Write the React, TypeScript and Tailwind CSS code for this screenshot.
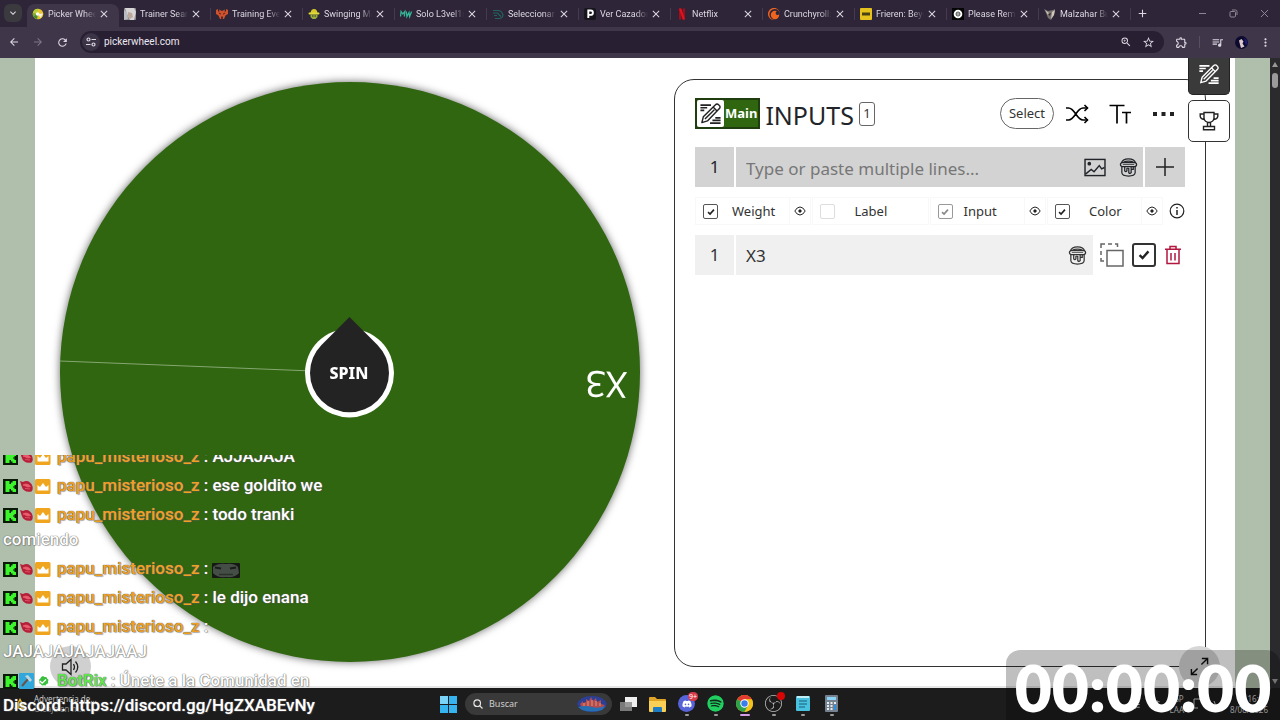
import type { ReactNode } from "react";
import {
  MdAdd, MdArrowBack, MdArrowForward, MdClose, MdKeyboardArrowDown, MdMoreVert, MdOutlineExtension,
  MdQueueMusic, MdRefresh, MdStarBorder, MdTune, MdZoomIn,
} from "react-icons/md";
import { FaDiscord, FaSpotify } from "react-icons/fa";
import { SiCrunchyroll, SiObsstudio } from "react-icons/si";

type IconProps = { className?: string };

/* ---------- favicons ---------- */

const Fav = ({ children }: { children: ReactNode }) => (
  <svg viewBox="0 0 12 12" className="h-3 w-3 shrink-0" aria-hidden="true">{children}</svg>
);

const favicons: Record<string, ReactNode> = {
  wheel: (
    <Fav>
      <circle cx="6" cy="6" r="5.3" fill="#e8c52c" />
      <path d="M6 6V.7A5.3 5.3 0 0 0 .9 5z" fill="#b9cf3a" />
      <path d="M6 6L1 8A5.3 5.3 0 0 0 5 11.2z" fill="#4c8a36" />
      <path d="M6 6L.8 5A5 5 0 0 0 1.2 8.2z" fill="#79ab35" />
      <circle cx="5.6" cy="6" r="1.8" fill="#fff" />
      <path d="M6 6l5-.5-2.500 4.500z" fill="#f6f2dd" />
    </Fav>
  ),
  trainer: (
    <Fav>
      <rect width="12" height="12" rx="1" fill="#8d8b90" />
      <path d="M1 0h9l2 4-2 8H6L3 6z" fill="#d8d5d6" />
      <path d="M4 4l4 1 1 4-3 2-2-3z" fill="#bda79a" />
      <path d="M0 2l3 2 1 7-4 1z" fill="#b9bcc0" />
    </Fav>
  ),
  events: (
    <Fav>
      <path d="M0 2l2-1v2.500h1.500L3 1.500 6 3l3-1.500-.5 2H10V1l2 1v4L9.500 7.500 8 11H6.800V8.500H5.200V11H4L2.500 7.500 0 6z" fill="#d1512b" />
      <path d="M3 5l2 1.200M9 5L7 6.200" stroke="#3f2430" strokeWidth="1" />
    </Fav>
  ),
  swing: (
    <Fav>
      <path d="M2.500 5Q3 1 6 1t3.500 4z" fill="#d6c926" />
      <rect x=".5" y="4.500" width="11" height="2" rx="1" fill="#e4da3a" />
      <path d="M2.500 6.500h7V9L7.500 11h-3L2.500 9z" fill="#9cae3d" />
      <path d="M4 7.500h1.500v1H4zM6.500 7.500H8v1H6.500z" fill="#2b2b20" />
    </Fav>
  ),
  mw: (
    <Fav>
      <path d="M.5 8.500l.6-5L2.800 6l2-2.500-.4 5M6.300 3.500l.6 5L9 4.500l.6 4 2-5" fill="none" stroke="#35b597" strokeWidth="1.300" />
    </Fav>
  ),
  select: (
    <Fav>
      <path d="M1 2.500h5.500Q10 3 11 7q-.5 3.500-4 3.500H3M1 5h4.500L9 8.500M2 7.500h3" fill="none" stroke="#23625f" strokeWidth="1.200" />
    </Fav>
  ),
  ver: (
    <Fav>
      <rect width="12" height="12" rx="2" fill="#17151b" />
      <path d="M4.300 10V2.500h2.400a2.200 2.200 0 0 1 0 4.400H4.500" fill="none" stroke="#fff" strokeWidth="1.900" />
    </Fav>
  ),
  netflix: (
    <Fav>
      <path d="M3 .5h2.300v11H3zM6.700.5H9v11H6.700z" fill="#a30d17" />
      <path d="M3 .5h2.300L9 11.500H6.700z" fill="#df1420" />
    </Fav>
  ),
  crunchy: <SiCrunchyroll className="h-3 w-3 shrink-0 text-[#f0641e]" />,
  imdb: (
    <Fav>
      <rect width="12" height="12" rx="1" fill="#e6c31c" />
      <path d="M2 4.500h8v3H2z" fill="#4c4113" />
    </Fav>
  ),
  remain: (
    <Fav>
      <rect width="12" height="12" fill="#050505" />
      <circle cx="6" cy="6" r="4.300" fill="#fff" />
      <circle cx="6" cy="6" r="2" fill="none" stroke="#222" strokeWidth=".8" />
      <path d="M4.500 6h3" stroke="#222" strokeWidth=".8" />
    </Fav>
  ),
  malzahar: (
    <Fav>
      <path d="M0 1l4 2 5-1 2-1-1 6-3 5-3-2-2-5z" fill="#77716f" />
      <path d="M1 2l4 3-1 2zM8 4l3-2-1 5-3 4z" fill="#cfc6ba" />
      <path d="M4 6l3-1-1 3z" fill="#322c30" />
    </Fav>
  ),
};

const tabs = [
  ["wheel", "Picker Whee"],
  ["trainer", "Trainer Sear"],
  ["events", "Training Ever"],
  ["swing", "Swinging Ma"],
  ["mw", "Solo L3vel1n"],
  ["select", "Seleccionar p"],
  ["ver", "Ver Cazador"],
  ["netflix", "Netflix"],
  ["crunchy", "Crunchyroll:"],
  ["imdb", "Frieren: Beyo"],
  ["remain", "Please Rema"],
  ["malzahar", "Malzahar Bu"],
];

/* ---------- page icons ---------- */

const PencilLines = ({ className }: IconProps) => (
  <svg viewBox="0 0 24 24" className={className} fill="none" stroke="currentColor" strokeWidth="1.500" aria-hidden="true">
    <path d="M1.500 3.200h11M1.500 6h7M1.500 8.800h4" strokeWidth="1.800" />
    <path d="M17 16.500h5.500M14 19.200h8.500M11.500 22h11" strokeWidth="1.800" />
    <path d="M3 21.500l1.500-6L17.200 2.800a2.200 2.200 0 0 1 3.200 0l.9.900a2.200 2.200 0 0 1 0 3.200L8.800 19.700z" strokeLinejoin="round" />
    <path d="M14.700 5.300l4.100 4.100M6.200 17.800L16 8" />
  </svg>
);

const Trophy = ({ className }: IconProps) => (
  <svg viewBox="0 0 20 20" className={className} fill="none" stroke="currentColor" strokeWidth="1.400" aria-hidden="true">
    <path d="M5 1.500h10v5.500q-.3 4-5 4.500-4.700-.5-5-4.500zM5 3H1.200v2.500Q1.500 8 5.200 8.500M15 3h3.800v2.500q-.3 2.500-4 3M8.500 11.500V15M11.500 11.500V15M4.500 15.500h11v3.300h-11z" />
  </svg>
);

const Bucket = ({ className }: IconProps) => (
  <svg viewBox="0 0 20 20" className={className} fill="none" stroke="currentColor" strokeWidth="1.300" aria-hidden="true">
    <path d="M2.500 5.500Q3.500 1 10 1t7.500 4.500" />
    <path d="M4 4.800Q10 1.800 16 4.800" />
    <rect x="1.500" y="4.800" width="17" height="4.200" rx="2.100" />
    <path d="M3 9v6.500q.5 3.500 7 3.500t7-3.500V9" />
    <path d="M6 9v4.500q1.200 1.500 2.300 0V11q1-.8 2 0v4.500q1.300 1.500 2.500 0V9.500M15 9v3h-2" />
    <path d="M4 6.900h12" strokeWidth=".8" />
  </svg>
);

const Shuffle = ({ className }: IconProps) => (
  <svg viewBox="0 0 24 20" className={className} fill="none" stroke="currentColor" strokeWidth="1.600" aria-hidden="true">
    <path d="M1 4h2.500C10 4 11.500 16 18 16h4.500M1 16h2.500C10 16 11.500 4 18 4h4.500" />
    <path d="M19.500 1l3 3-3 3M19.500 13l3 3-3 3" />
  </svg>
);

const TextSize = ({ className }: IconProps) => (
  <svg viewBox="0 0 24 24" className={className} fill="none" stroke="currentColor" strokeWidth="1.700" aria-hidden="true">
    <path d="M1.500 3.500h15M9 3.500V21.500M14 10.500h9M18.500 10.500V21.500" />
  </svg>
);

const Picture = ({ className }: IconProps) => (
  <svg viewBox="0 0 24 20" className={className} fill="none" stroke="currentColor" strokeWidth="1.500" aria-hidden="true">
    <rect x="1.500" y="1.500" width="21" height="17" />
    <path d="M2 17l6-5 3 2.500L16.500 8l2.500 3.500 3-1.500" />
    <circle cx="6" cy="6" r="1.200" fill="currentColor" />
  </svg>
);

const Eye = () => (
  <svg viewBox="0 0 12 10" className="h-[10px] w-3" fill="none" stroke="#222" strokeWidth="1" aria-hidden="true">
    <path d="M.8 5Q3 1 6 1t5.200 4Q9 9 6 9T.8 5z" />
    <circle cx="6" cy="5" r="1.200" fill="#222" />
  </svg>
);

const Trash = ({ className }: IconProps) => (
  <svg viewBox="0 0 18 20" className={className} fill="none" stroke="currentColor" strokeWidth="1.500" aria-hidden="true">
    <path d="M1 4.300h16M6 4V1.500h6V4M3 4.500v14h12v-14M7 8v7.500M11 8v7.500" />
  </svg>
);

const Duplicate = ({ className }: IconProps) => (
  <svg viewBox="0 0 24 24" className={className} fill="none" stroke="#666" strokeWidth="1.500" aria-hidden="true">
    <rect x="7" y="7.500" width="16" height="15.500" />
    <path d="M1 5V1h4M8 1h4M15 1h2.500v3M1 8v4M1 15v3h3" />
  </svg>
);

const Tick = ({ className }: IconProps) => (
  <svg viewBox="0 0 10 10" className={className} fill="none" stroke="currentColor" strokeWidth="2" aria-hidden="true">
    <path d="M1.300 5.200l2.500 2.400L8.700 2" />
  </svg>
);

const Speaker = ({ className }: IconProps) => (
  <svg viewBox="0 0 20 20" className={className} fill="none" stroke="currentColor" strokeWidth="1.300" aria-hidden="true">
    <path d="M1.500 7v6h3.500l5 4.500v-15L5 7zM12.500 7q2 3 0 6M14.500 4.500q4.500 5.500 0 11" />
  </svg>
);

const Expand = ({ className }: IconProps) => (
  <svg viewBox="0 0 20 20" className={className} fill="none" stroke="currentColor" strokeWidth="1.500" aria-hidden="true">
    <path d="M12 8l6.500-6.500M12.500 1.500h6v6M8 12l-6.500 6.500M1.500 12.500v6h6" />
  </svg>
);

/* ---------- browser chrome ---------- */

function Browser() {
  return (
    <header className="shrink-0 text-[#ddd8e4]">
      <div className="flex h-[27px] items-end bg-[#2e2638]">
        <button aria-label="Search tabs" className="mb-[5px] ml-1 mr-[5px] flex h-[18px] w-[18px] items-center justify-center rounded-md bg-[#3b3a3e]">
          <MdKeyboardArrowDown className="h-3 w-3" />
        </button>
        <nav className="flex min-w-0" aria-label="Tabs">
          {tabs.map(([icon, title], i) => (
            <div
              key={title}
              className={`flex h-[23px] w-[92px] min-w-0 items-center pb-1 pl-[5px] ${i === 0 ? "rounded-t-lg bg-[#3f3749]" : ""}`}
            >
              {favicons[icon]}
              <a
                href="#tab"
                className="ml-1 w-12 overflow-hidden whitespace-nowrap font-['Roboto',sans-serif] text-[9px] leading-4 [mask-image:linear-gradient(to_right,black_75%,transparent)]"
              >
                {title}
              </a>
              <button aria-label={`Close ${title}`} className="ml-[2px]">
                <MdClose className="h-3 w-3" />
              </button>
              <span className={`ml-auto h-3 w-px ${i === 0 ? "" : "bg-[#443c4e]"}`} />
            </div>
          ))}
        </nav>
        <button aria-label="New tab" className="mb-[7px] ml-[5px]"><MdAdd className="h-[13px] w-[13px]" /></button>
        <div className="mb-[9px] ml-auto mr-[11px] flex items-center gap-[22px] text-[#8d8795]">
          <button aria-label="Minimize"><svg viewBox="0 0 9 9" className="h-[9px] w-[9px]" stroke="currentColor"><path d="M1 4.500h7" /></svg></button>
          <button aria-label="Restore">
            <svg viewBox="0 0 9 9" className="h-[9px] w-[9px]" fill="none" stroke="currentColor"><rect x="1" y="2.500" width="5.500" height="5.500" rx="1" /><path d="M3 1h3.500Q8 1 8 2.500V6" /></svg>
          </button>
          <button aria-label="Close"><svg viewBox="0 0 9 9" className="h-[9px] w-[9px]" stroke="currentColor"><path d="M1 1l7 7M8 1L1 8" /></svg></button>
        </div>
      </div>
      <div className="flex h-[31px] items-center bg-[#3f3749] pb-px pl-[2px] pr-2">
        <button aria-label="Back" className="flex w-6 justify-center"><MdArrowBack className="h-3 w-3" /></button>
        <button aria-label="Forward" className="flex w-6 justify-center text-[#7e7688]"><MdArrowForward className="h-3 w-3" /></button>
        <button aria-label="Reload" className="flex w-6 justify-center"><MdRefresh className="h-[13px] w-[13px]" /></button>
        <div className="ml-[6px] flex h-[22px] flex-1 items-center rounded-full bg-[#281f32] pl-[2px] pr-[9px]">
          <button aria-label="Site information" className="flex h-[18px] w-[18px] items-center justify-center rounded-full bg-[#3b3346]">
            <svg viewBox="0 0 10 10" className="h-[10px] w-[10px]" fill="none" stroke="currentColor" strokeWidth="1.200" aria-hidden="true">
              <path d="M5.500 2.500H10M0 7.500h4.500" /><circle cx="2.500" cy="2.500" r="1.500" /><circle cx="7.500" cy="7.500" r="1.500" />
            </svg>
          </button>
          <input aria-label="Address" defaultValue="pickerwheel.com" className="ml-1 min-w-0 flex-1 bg-transparent font-['Roboto',sans-serif] text-[10px] leading-4 text-[#ece8f0] outline-none" />
          <button aria-label="Zoom"><MdZoomIn className="h-3 w-3" /></button>
          <button aria-label="Bookmark" className="ml-[10px]"><MdStarBorder className="h-[13px] w-[13px]" /></button>
        </div>
        <button aria-label="Extensions" className="ml-[11px]"><MdOutlineExtension className="h-[13px] w-[13px]" /></button>
        <span className="ml-[11px] h-3 w-px bg-[#574f62]" />
        <button aria-label="Media controls" className="ml-[11px]"><MdQueueMusic className="h-[13px] w-[13px]" /></button>
        <button aria-label="Profile" className="ml-[11px]">
          <svg viewBox="0 0 13 13" className="h-[13px] w-[13px]" aria-hidden="true">
            <circle cx="6.500" cy="6.500" r="6.500" fill="#0c0b2e" />
            <path d="M4 4.500l2.500-1.500 2 2.500-1 2 2 3L6 12 5 8.500z" fill="#ddc9cd" />
            <path d="M9 1.500l3 3 .5 3.500-2 1z" fill="#1d1a70" />
          </svg>
        </button>
        <button aria-label="Menu" className="ml-[11px]"><MdMoreVert className="h-[13px] w-[13px]" /></button>
      </div>
    </header>
  );
}

/* ---------- wheel ---------- */

function Wheel() {
  return (
    <section className="flex min-w-0 flex-1 items-center justify-center pr-[10px]">
      <svg viewBox="0 0 580 580" className="w-[580px] max-w-full overflow-visible drop-shadow-[0_0_4px_rgba(0,0,0,0.6)]" role="img" aria-label="Wheel">
        <circle cx="290" cy="290" r="290" fill="#2f660f" />
        <path d="M0 279L290 290.500" stroke="#86a672" strokeWidth="1" />
        <text
          transform="translate(546 303) rotate(182)"
          textAnchor="middle"
          dominantBaseline="central"
          fill="#fff"
          className="font-['Noto_Sans',sans-serif] text-[36px]"
        >
          X3
        </text>
        <circle cx="289.500" cy="291" r="44.500" fill="#fff" />
        <path d="M289.500 235L317.500 263A39.500 39.500 0 1 1 261.500 263z" fill="#242323" />
        <text x="289" y="297" textAnchor="middle" fill="#fff" className="font-['Noto_Sans',sans-serif] text-[16px] font-extrabold">SPIN</text>
      </svg>
    </section>
  );
}

/* ---------- inputs panel ---------- */

type ColumnProps = { name: string; box: string; pad?: string; tick?: string; eye?: boolean };

const columns: ColumnProps[] = [
  { name: "Weight", box: "border-[#555]", tick: "text-[#222]", eye: true },
  { name: "Label", box: "border-[#ddd]" },
  { name: "Input", box: "border-[#999]", pad: "pr-4", tick: "text-[#888]", eye: true },
  { name: "Color", box: "border-[#555]", tick: "text-[#222]", eye: true },
];

function ColumnToggle({ name, box, pad = "", tick, eye }: ColumnProps) {
  return (
    <div className="flex h-7 min-w-0 flex-1 basis-0 items-center border border-[#f8f8f8] pl-[7px]">
      <label className={`flex flex-1 items-center pt-px text-[13px] text-[#333] ${pad}`}>
        <span className="grid place-items-center">
          <input type="checkbox" defaultChecked={!!tick} className={`col-start-1 row-start-1 h-[15px] w-[15px] appearance-none rounded-[2px] border ${box}`} />
          {tick && <Tick className={`col-start-1 row-start-1 h-2 w-2 ${tick}`} />}
        </span>
        <span className="flex-1 text-center">{name}</span>
      </label>
      {eye ? (
        <button aria-label={`Show ${name}`} className="flex h-full w-[21px] items-center justify-center border-l border-[#f8f8f8]"><Eye /></button>
      ) : (
        <span className="w-[21px]" />
      )}
    </div>
  );
}

function InputsPanel() {
  return (
    <section className="mb-[19px] mr-[29px] mt-[21px] w-[532px] shrink-0 rounded-[20px] border border-[#333] px-5 pt-[18px]">
      <div className="flex h-[31px] items-center">
        <button className="flex h-[31px] items-center gap-px border-2 border-[#1f3d0e] bg-[#2f660f] pr-px text-[13px] font-bold text-white">
          <span className="flex h-[27px] w-[27px] items-center justify-center rounded-[2px] bg-white text-[#222]"><PencilLines className="h-[23px] w-[23px]" /></span>
          Main
        </button>
        <h1 className="ml-[5px] pt-[2px] text-[25px] leading-8 text-[#212529]">INPUTS</h1>
        <span className="ml-[5px] flex h-6 w-4 items-center justify-center rounded-[3px] border border-[#666] text-[13px] text-[#333]">1</span>
        <button className="ml-auto h-[31px] w-[54px] rounded-full border border-[#666] pt-px text-[13px] text-[#333]">Select</button>
        <button aria-label="Shuffle" className="ml-[11px]"><Shuffle className="h-5 w-6" /></button>
        <button aria-label="Text size" className="ml-[19px]"><TextSize className="h-6 w-6" /></button>
        <button aria-label="More" className="ml-[21px] mr-[11px]">
          <svg viewBox="0 0 21 4" className="h-1 w-[21px]" fill="#222"><path d="M0 0h4v4H0zM8.500 0h4v4h-4zM17 0h4v4h-4z" /></svg>
        </button>
      </div>

      <form className="mt-[18px] flex h-10 gap-[2px] text-[17px] text-[#212529]">
        <span className="flex w-[39px] items-center justify-center bg-[#d3d3d3]">1</span>
        <div className="flex flex-1 items-center bg-[#d3d3d3] pr-[5px]">
          <input aria-label="New input" placeholder="Type or paste multiple lines..." className="min-w-0 flex-1 bg-transparent pl-[10px] pt-[3px] outline-none placeholder:text-[#777]" />
          <button type="button" aria-label="Add image"><Picture className="h-[19px] w-6" /></button>
          <button type="button" aria-label="Pick color" className="ml-[12px]"><Bucket className="h-[19px] w-[19px]" /></button>
        </div>
        <button type="button" aria-label="Add" className="flex w-10 items-center justify-center bg-[#d3d3d3]">
          <svg viewBox="0 0 18 18" className="h-[18px] w-[18px]" stroke="#222" strokeWidth="1.500"><path d="M9 0v18M0 9h18" /></svg>
        </button>
      </form>

      <div className="mt-[10px] flex items-center gap-px">
        {columns.map((c) => <ColumnToggle key={c.name} {...c} />)}
        <button aria-label="Information" className="ml-[5px]">
          <svg viewBox="0 0 16 16" className="h-4 w-4" fill="none" stroke="#222" strokeWidth="1.200"><circle cx="8" cy="8" r="6.800" /><path d="M8 7v5M8 4v1.500" strokeWidth="1.500" /></svg>
        </button>
      </div>

      <div className="mt-[10px] flex h-10 items-center text-[17px] text-[#333]">
        <span className="flex h-full w-[39px] items-center justify-center bg-[#f0f0f0]">1</span>
        <div className="ml-[2px] flex h-full flex-1 items-center bg-[#f0f0f0] pr-[6px]">
          <input aria-label="Input 1" defaultValue="X3" className="min-w-0 flex-1 bg-transparent pl-[10px] pt-px outline-none" />
          <button aria-label="Color of input 1"><Bucket className="h-[19px] w-[19px]" /></button>
        </div>
        <button aria-label="Duplicate" className="ml-[7px]"><Duplicate className="h-6 w-6" /></button>
        <label className="ml-2 grid place-items-center">
          <input type="checkbox" defaultChecked aria-label="Enable input 1" className="col-start-1 row-start-1 h-6 w-6 appearance-none rounded-[3px] border-2 border-[#333]" />
          <Tick className="col-start-1 row-start-1 h-3 w-3 text-[#222]" />
        </label>
        <button aria-label="Delete" className="ml-2 mr-[3px] text-[#b3173f]"><Trash className="h-5 w-[18px]" /></button>
      </div>
    </section>
  );
}

function Page() {
  return (
    <div className="relative flex min-h-0 flex-1">
      <div className="w-[35px] shrink-0 bg-[#b0bfab]" />
      <main className="flex min-w-0 flex-1 border-b-2 border-[#e6e6e6] bg-white">
        <Wheel />
        <InputsPanel />
      </main>
      <div className="w-[35px] shrink-0 bg-[#b0bfab]" />
      <div className="flex w-[10px] shrink-0 flex-col items-center bg-[#2b2a2c] py-1">
        <svg viewBox="0 0 6 5" className="h-[5px] w-[6px]" fill="#999"><path d="M3 0l3 5H0z" /></svg>
        <span className="mt-[6px] h-[15px] w-[6px] rounded-full bg-[#9b9b9b]" />
        <svg viewBox="0 0 6 5" className="mt-auto h-[5px] w-[6px]" fill="#999"><path d="M0 0h6L3 5z" /></svg>
      </div>
      <div className="absolute right-[50px] top-0 flex flex-col gap-[5px]">
        <button aria-label="Inputs view" className="flex h-[37px] w-[42px] items-center justify-center rounded-b-[5px] border border-t-0 border-[#222] bg-[#3a3a3a] pb-1 text-white"><PencilLines className="h-[22px] w-[22px]" /></button>
        <button aria-label="Results view" className="flex h-[42px] w-[42px] items-center justify-center rounded-[5px] border border-[#333] bg-white text-[#222]"><Trophy className="h-5 w-5" /></button>
      </div>
      <button aria-label="Sound" className="absolute bottom-px left-[50px] flex h-[41px] w-[41px] items-center justify-center rounded-full bg-[#d0d0d0] text-[#222]"><Speaker className="h-5 w-5" /></button>
      <button aria-label="Full screen" className="absolute bottom-px right-[60px] flex h-[41px] w-[41px] items-center justify-center rounded-full bg-[#d6d6d6] text-[#111]"><Expand className="h-[19px] w-[19px]" /></button>
    </div>
  );
}

/* ---------- taskbar ---------- */

function AppButton({ label, children, mark = "bg-[#9a9a9a] w-1" }: { label: string; children: ReactNode; mark?: string }) {
  return (
    <button aria-label={label} className="flex w-[17px] flex-col items-center gap-[2px] pt-[3px]">
      {children}
      <span className={`h-[2px] rounded-full ${mark}`} />
    </button>
  );
}

function Taskbar() {
  return (
    <footer className="grid h-8 shrink-0 grid-cols-[1fr_auto_1fr] items-center bg-[#1c1c1c] text-[#c8c8c8]">
      <div className="flex items-center gap-[7px] pl-[13px]">
        <svg viewBox="0 0 14 14" className="h-[14px] w-[14px]" aria-hidden="true"><path d="M7 1l6 11H1z" fill="#e9bb28" /><path d="M7 4.500v4M7 9.500v1.300" stroke="#222" strokeWidth="1.200" /></svg>
        <div className="text-[8px] leading-[10px]">
          <div>Advertencia de...</div>
          <div className="text-[#8d8d8d]">Oleaje en m...</div>
        </div>
      </div>
      <div className="flex items-center gap-3">
        <button aria-label="Start" className="-mr-1">
          <svg viewBox="0 0 17 17" className="h-[17px] w-[17px]" fill="#35b4f0"><path d="M0 0h8v8H0zM9 0h8v8H9zM0 9h8v8H0zM9 9h8v8H9z" /><path d="M0 0h8v8H0z" fill="#7ad4fa" /></svg>
        </button>
        <label className="-mr-1 flex h-[22px] w-[147px] items-center overflow-hidden rounded-full bg-[#393939] pl-2 pr-1">
          <svg viewBox="0 0 10 10" className="h-[10px] w-[10px] shrink-0" fill="none" stroke="#e5e5e5" strokeWidth="1.200"><circle cx="4.200" cy="4.200" r="3.300" /><path d="M6.600 6.600L9.500 9.500" /></svg>
          <input aria-label="Buscar" placeholder="Buscar" className="ml-[6px] min-w-0 flex-1 bg-transparent text-[9px] leading-4 outline-none placeholder:text-[#cfcfcf]" />
          <svg viewBox="0 0 32 18" className="h-[18px] w-8 shrink-0" aria-hidden="true">
            <path d="M1 9Q4 1 16 1t15 8q-3 8-15 8T1 9z" fill="#2b3f96" />
            <path d="M4 9l3-3v2l3-1V4l3 2 2-4 2 4 3-3 1 4 4-2v4l4 1-3 3H6z" fill="#b04c52" />
            <path d="M8 8v3M12 6v5M16 5v6M20 6v5M24 8v3" stroke="#e8946a" />
            <path d="M2 12q8-2 14 0t14-1l-4 4q-10 3-20 0z" fill="#256fb2" />
          </svg>
        </label>
        <button aria-label="Task view"><svg viewBox="0 0 17 15" className="h-[15px] w-[17px]"><path d="M5 0h12v10H5z" fill="#efefef" /><path d="M0 5h12v9H0z" fill="#8b8b8b" fillOpacity=".85" /></svg></button>
        <button aria-label="File explorer">
          <svg viewBox="0 0 17 15" className="h-[15px] w-[17px]"><path d="M0 1q0-1 1-1h5l2 2h8q1 0 1 1v11H0z" fill="#e0a526" /><path d="M0 4h17v10q0 1-1 1H1q-1 0-1-1z" fill="#f9cf55" /><path d="M4 15v-4q0-1 1-1h7q1 0 1 1v4z" fill="#1d7cc4" /></svg>
        </button>
        <AppButton label="Discord">
          <span className="relative flex h-[17px] w-[17px] items-center justify-center rounded-full bg-[#5763d8] text-white">
            <FaDiscord className="h-[10px] w-[10px]" />
            <span className="absolute -right-[3px] -top-[3px] rounded-full bg-[#d63b49] px-px text-[7px] leading-[9px]">9+</span>
          </span>
        </AppButton>
        <AppButton label="Spotify"><FaSpotify className="h-[17px] w-[17px] rounded-full bg-[#14271b] text-[#20cf60]" /></AppButton>
        <AppButton label="Chrome" mark="bg-[#d69ce6] w-[10px]">
          <svg viewBox="0 0 17 17" className="h-[17px] w-[17px]">
            <circle cx="8.500" cy="8.500" r="8.500" fill="#f4c21b" />
            <path d="M8.500 8.500L1.140 4.250A8.500 8.500 0 0 1 15.860 4.250H8.500z" fill="#e23a2e" />
            <path d="M8.500 8.500L1.140 4.250A8.500 8.500 0 0 0 8.500 17l3.500-6.500z" fill="#2ba24c" />
            <path d="M8.500 4.500h7.500l-.140-.250A8.500 8.500 0 0 1 8.500 17l3.500-6z" fill="#f4c21b" />
            <circle cx="8.500" cy="8.500" r="4.200" fill="#fff" /><circle cx="8.500" cy="8.500" r="3.200" fill="#3b7ded" />
          </svg>
        </AppButton>
        <AppButton label="OBS Studio">
          <span className="relative"><SiObsstudio className="h-[17px] w-[17px] text-[#bdbdbd]" /><span className="absolute -right-[3px] -top-[3px] h-2 w-2 rounded-full bg-[#d90404]" /></span>
        </AppButton>
        <AppButton label="Notepad">
          <svg viewBox="0 0 14 17" className="h-[17px] w-[14px]"><rect x="0" y="1" width="14" height="15" rx="1" fill="#49c2e0" /><path d="M1 1h12v2H1z" fill="#c3eef6" /><path d="M3 6h8M3 9h8M3 12h6" stroke="#185d78" strokeWidth="1.200" /></svg>
        </AppButton>
        <AppButton label="Calculator">
          <svg viewBox="0 0 13 17" className="h-[17px] w-[13px]"><rect width="13" height="17" rx="1" fill="#75818f" /><path d="M2 2h9v3H2z" fill="#8bd4f5" /><path d="M2 7h2v2H2zM5.500 7h2v2h-2zM9 7h2v2H9zM2 10h2v2H2zM5.500 10h2v2h-2zM2 13h2v2H2zM5.500 13h2v2h-2z" fill="#e5ebf0" /><path d="M9 10h2v5H9z" fill="#2f8fe0" /></svg>
        </AppButton>
      </div>
      <div className="flex items-center justify-end gap-[9px] pr-3 text-[8px] leading-[11px]">
        <svg viewBox="0 0 8 8" className="h-2 w-2" fill="none" stroke="currentColor"><path d="M1 5.500L4 2.500l3 3" /></svg>
        <MdTune className="h-[11px] w-[11px]" />
        <MdTune className="h-[11px] w-[11px]" />
        <div className="text-center">ESP<br />LAA</div>
        <svg viewBox="0 0 28 12" className="h-3 w-7" fill="none" stroke="currentColor"><path d="M10 1H1v9h4M13 8l4-4v7zM19 5q2 2 0 4M21 3q3 4 0 7" /></svg>
        <div className="text-right">16:08<br />8/08/2026</div>
      </div>
    </footer>
  );
}

/* ---------- stream overlays ---------- */

function Badges({ bot }: { bot?: boolean }) {
  return (
    <svg viewBox="0 0 48 16" className="mr-[6px] inline-block h-4 w-12 align-[-3px]" aria-hidden="true">
      <rect x="0" y="1" width="15" height="15" fill="#0a1a08" />
      <path d="M2.500 3h4v3H8V4.500h1.500V3H13v4h-1.500v1.500H10v1h1.500V11H13v3H9.500v-1.500H8V11H6.500v3h-4z" fill="#3df52c" />
      {bot ? (
        <g>
          <rect x="16" y="0" width="15" height="16" rx="1" fill="#31a8dc" />
          <path d="M19 13l6-7" stroke="#685447" strokeWidth="2" />
          <path d="M22 3l3-1 4 5-2 2z" fill="#c2d5dd" />
          <path d="M40 3l1.500 1 1.800 0 .8 1.600 1.400 1.200-.5 1.700.2 1.800-1.600.8-1.100 1.500-1.800-.4-1.800.400-1.100-1.500-1.500-.8.200-1.800-.5-1.700 1.400-1.200.800-1.600z" fill="#39bf3e" />
          <path d="M37 8l2.200 2.200L43 6.500" fill="none" stroke="#fff" strokeWidth="1.300" />
        </g>
      ) : (
        <g>
          <path d="M17 3l3 1Q24 2 27 4.500q3.500 3 2.500 7.500l-1 1.500Q20.500 15 18.500 8z" fill="#b51f38" />
          <path d="M20 7q4-2.500 7.500 1.500l-2.500.5zM22 10.500l5 .5" fill="#e8606f" stroke="#e8606f" strokeWidth=".8" />
          <rect x="32" y="1" width="15.500" height="15" rx="1.500" fill="#f0a51f" />
          <path d="M34.500 12.500V7l2.500 2 3-4 3 4 2.500-2v5.500z" fill="#fff" />
        </g>
      )}
    </svg>
  );
}

const chat: { text: ReactNode; bot?: boolean }[] = [
  { text: "AJJAJAJA" },
  { text: "ese goldito we" },
  { text: "todo tranki comiendo" },
  {
    text: (
      <svg viewBox="0 0 28 16" className="inline-block h-4 w-7 align-[-4px]" role="img" aria-label="frog">
        <rect width="28" height="15" y="1" rx="1" fill="#161815" />
        <path d="M1 5q5-4 13-3 8-1 12 3l1 6q-4 5-13 4-9 1-13-4z" fill="#454e46" />
        <path d="M3 5.500l6 1M18 6.500l6-1" stroke="#1a1d1a" strokeWidth="2" fill="none" />
        <path d="M7 12.500h14" stroke="#2a302a" strokeWidth="1.500" fill="none" />
      </svg>
    ),
  },
  { text: "le dijo enana" },
  { text: "JAJAJAJAJAJAAJ" },
  { text: "Únete a la Comunidad en Discord: https://discord.gg/HgZXABEvNy", bot: true },
];

function Chat() {
  return (
    <aside
      aria-label="Chat"
      className="absolute bottom-0 left-0 flex h-[265px] w-[340px] flex-col justify-end gap-1 overflow-hidden pb-[2px] pl-[3px] font-['Roboto',sans-serif] text-[17px] font-medium leading-[25px] text-white [text-shadow:0_0_1px_#666,0_0_1px_#666,1px_1px_1px_#5556]"
    >
      {chat.map(({ text, bot }, i) => (
        <p key={i}>
          <Badges bot={bot} />
          <span className={bot ? "text-[#5fe84d]" : "text-[#f0a020]"}>{bot ? "BotRix" : "papu_misterioso_z"}</span>
          {" : "}
          {text}
        </p>
      ))}
    </aside>
  );
}

function Timer() {
  return (
    <div className="absolute bottom-0 right-0 flex h-[70px] w-[274px] items-center justify-center rounded-t-[14px] bg-black/25 pt-[6px] font-['Lato',sans-serif] text-[64px] font-extrabold leading-[62px] text-white">
      00:00:00
    </div>
  );
}

export default function App() {
  return (
    <div className="relative flex h-screen min-w-0 flex-col overflow-hidden bg-white font-['Noto_Sans','Open_Sans',sans-serif]">
      <Browser />
      <Page />
      <Taskbar />
      <Chat />
      <Timer />
    </div>
  );
}
